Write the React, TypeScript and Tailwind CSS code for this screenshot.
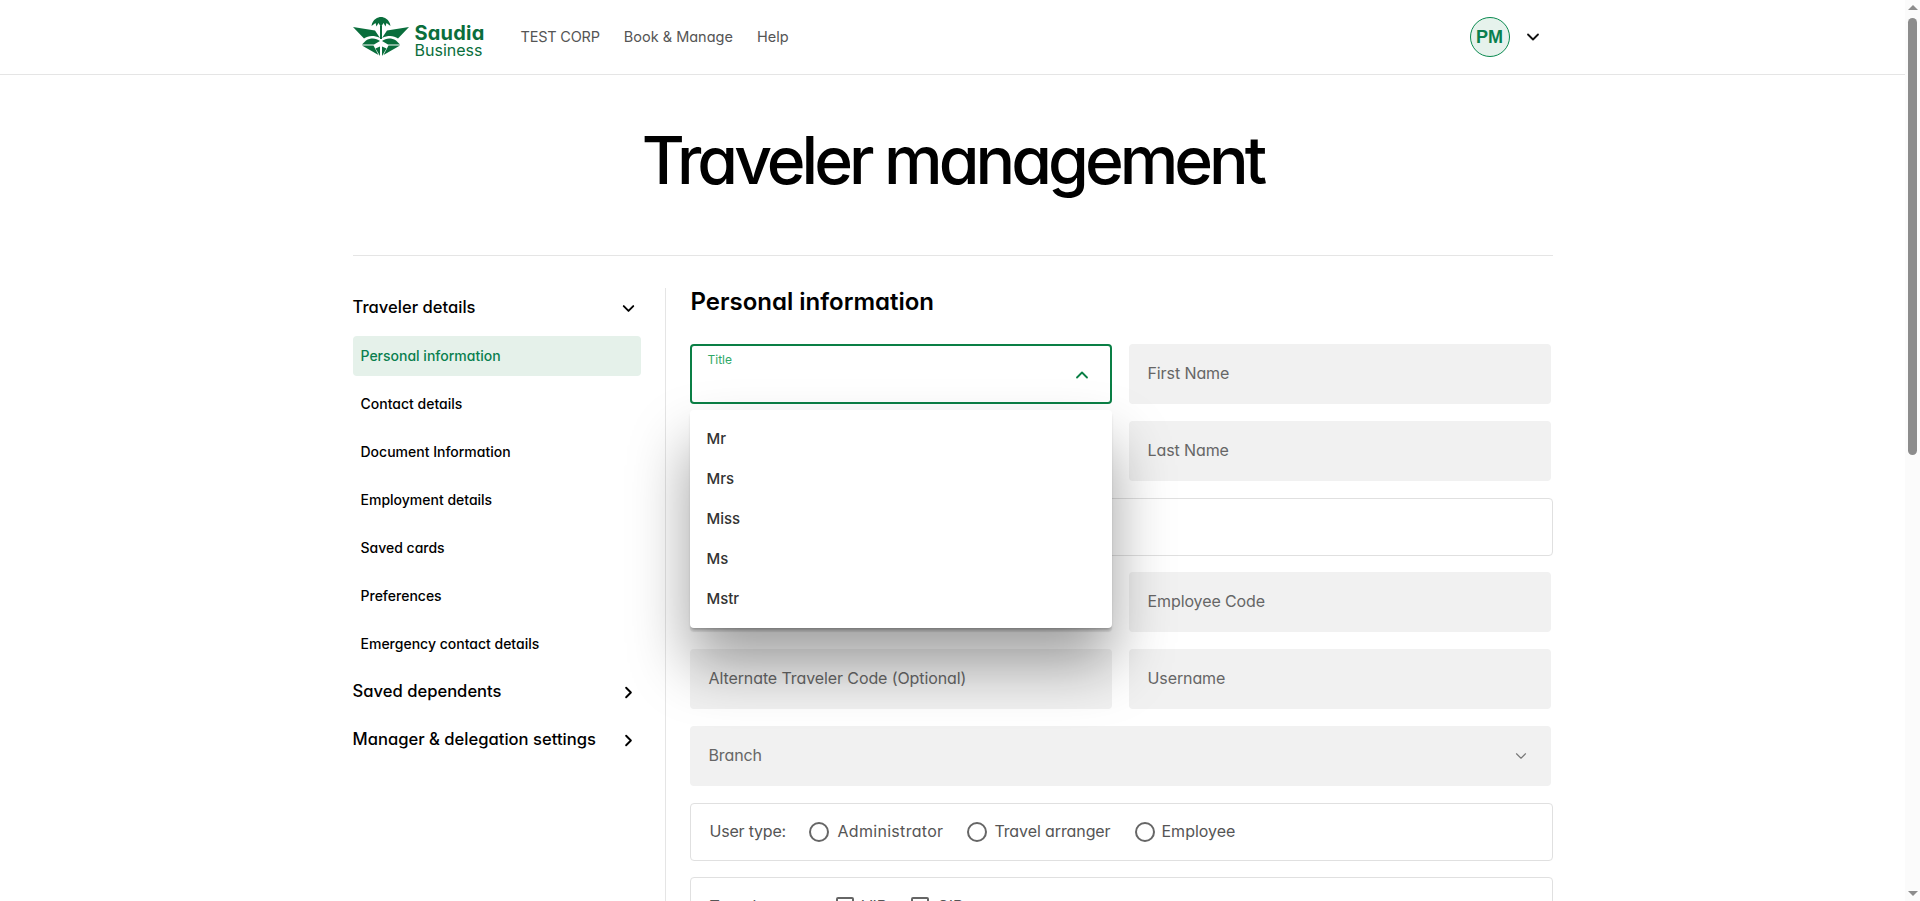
import React from "react";
import { ChevronDown, ChevronRight, ChevronUp } from "lucide-react";

const f = "font-['Inter','Liberation_Sans',sans-serif] [font-feature-settings:'cv11','ss03']";

function Logo() {
  return (
    <div className="flex items-center gap-[6px] w-[132px] h-[42px] text-[#0a6e3c]">
      <svg width="56" height="40" viewBox="0 0 56 40" className="shrink-0" fill="#0a6e3c">
        <path d="M0 10 L22 13.5 L27 21 C21 18 15 18.5 11 21.5 Z" />
        <path d="M56 10 L34 13.5 L29 21 C35 18 41 18.5 45 21.5 Z" />
        <path d="M9 27.5 L13 23.5 C18 20.5 23 21 27 24 L21 27.5 Z" />
        <path d="M47 27.5 L43 23.5 C38 20.5 33 21 29 24 L35 27.5 Z" />
        <path d="M27 39 L27 29.5 L22.5 31.5 Z" />
        <path d="M29 39 L29 29.5 L33.5 31.5 Z" />
        <path d="M9 28.5 L20.5 28.5 L25.5 38 Z" />
        <path d="M47 28.5 L35.5 28.5 L30.5 38 Z" />
        <rect x="27" y="9" width="2" height="13" />
        <path d="M18.5 9 C19.5 2 25 0 28 0 C31 0 36.500 2 37.500 9 L33.500 6 L32.500 9.500 L30.500 6 L28 10 L25.500 6 L23.500 9.500 L22.500 6 Z" />
      </svg>
      <div className="flex flex-col mt-[9px]">
        <div className="text-[20px] font-bold leading-[17px] tracking-[0.2px]">Saudia</div>
        <div className="text-[16px] leading-[17px] font-normal">Business</div>
      </div>
    </div>
  );
}

function Field({ label, chevron, full }: { label?: string; chevron?: boolean; full?: boolean }) {
  return (
    <div className={`h-[60px] bg-[#f1f1f1] rounded-[4px] flex items-center justify-between pl-[19px] pr-[21px] text-[16px] tracking-[-0.1px] text-[#666] ${full ? "w-[861px]" : "w-[422px]"}`}>
      <span className="-mt-[3px]">{label}</span>
      {chevron && <ChevronDown size={18} strokeWidth={1.5} className="text-[#777]" />}
    </div>
  );
}

function Row({ children }: { children: React.ReactNode }) {
  return <div className="h-[61px] flex gap-[17px]">{children}</div>;
}

function Radio({ label, cls, tight }: { label: string; cls?: string; tight?: boolean }) {
  return (
    <div className={`flex items-center ${tight ? "gap-[7px]" : "gap-[9px]"}`}>
      <span className="w-5 h-5 rounded-full border-2 border-[#666] bg-white" />
      <span className={`text-[16px] text-[#555] -mt-[2px] ${cls ?? ""}`}>{label}</span>
    </div>
  );
}

function Check({ label }: { label: string }) {
  return (
    <div className="flex items-center gap-2">
      <span className="w-[18px] h-[18px] rounded-[2px] border-2 border-[#666] bg-white" />
      <span className="text-[16px] text-[#555]">{label}</span>
    </div>
  );
}

function SideHead({ label, open }: { label: string; open?: boolean }) {
  return (
    <div className="h-10 flex items-center justify-between text-[16.6px] font-medium text-black">
      <span className="-mt-[1px]">{label}</span>
      {open ? <ChevronDown size={19} strokeWidth={2.4} className="mr-[3px]" /> : <ChevronRight size={19} strokeWidth={2.4} className="mr-[3px]" />}
    </div>
  );
}

function SideItem({ label, active }: { label: string; active?: boolean }) {
  return (
    <div className={`h-10 flex items-center px-2 rounded-[4px] text-[14px] font-medium ${active ? "bg-[#e5f1ea] text-[#0a7f4f]" : "text-black"}`}>
      <span className="-mt-[2px]">{label}</span>
    </div>
  );
}

export default function App() {
  return (
    <div className={`h-[901px] overflow-hidden flex bg-white ${f}`}>
      <div className="flex-1 min-w-0">
        <header className="h-[75px] border-b border-[#e5e5e5]">
          <div className="w-[1200px] mx-auto h-full flex items-center">
            <Logo />
            <nav className="ml-[36px] flex gap-[24px] text-[14.5px] text-[#555]">
              <span className="tracking-[-0.2px]">TEST CORP</span>
              <span>Book &amp; Manage</span>
              <span>Help</span>
            </nav>
            <div className="ml-auto mr-[10px] flex items-center gap-[13px]">
              <div className="w-10 h-10 rounded-full border border-[#0a8a50] bg-[#e6f2ec] flex items-center justify-center text-[#0a7f4f] text-[18px] font-bold font-['Liberation_Sans',sans-serif]">PM</div>
              <ChevronDown size={20} strokeWidth={2.2} className="text-[#111]" />
            </div>
          </div>
        </header>

        <div className="w-[1200px] mx-auto">
          <div className="h-[181px] border-b border-[#e5e5e5] flex items-center justify-center">
            <h1 className="text-[66px] font-medium text-black tracking-[-4px] -mt-[10px]">Traveler management</h1>
          </div>

          <div className="mt-[32px] flex">
            <aside className="w-[288px] flex flex-col gap-2 shrink-0">
              <SideHead label="Traveler details" open />
              <SideItem label="Personal information" active />
              <SideItem label="Contact details" />
              <SideItem label="Document Information" />
              <SideItem label="Employment details" />
              <SideItem label="Saved cards" />
              <SideItem label="Preferences" />
              <SideItem label="Emergency contact details" />
              <SideHead label="Saved dependents" />
              <SideHead label="Manager &amp; delegation settings" />
            </aside>

            <main className="ml-6 border-l border-[#e5e5e5] pl-[24px] w-[887px] h-[700px]">
              <h2 className="h-[56px] pl-px text-[24px] leading-[28px] font-semibold text-black">Personal information</h2>
              <div className="flex flex-col gap-4">
                <Row>
                  <div className="relative w-[422px] h-[60px] rounded-[4px] border-2 border-[#0a7f45] bg-white">
                    <span className="absolute left-[16px] top-[5px] text-[12px] text-[#2fa866]">Title</span>
                    <ChevronUp size={20} strokeWidth={2.2} className="absolute right-[18px] top-[19px] text-[#0a7f45]" />
                    <div className="absolute -left-[2px] top-[64px] w-[422px] h-[218px] py-[9px] z-10 bg-white rounded-[4px] shadow-[0_3px_3px_-1px_rgba(0,0,0,0.25),0_35px_60px_rgba(0,0,0,0.38)]">
                      {["Mr", "Mrs", "Miss", "Ms", "Mstr"].map((o) => (
                        <div key={o} className="h-10 flex items-center pl-[17px] text-[15px] font-medium text-[#333]">{o}</div>
                      ))}
                    </div>
                  </div>
                  <Field label="First Name" />
                </Row>
                <Row>
                  <Field />
                  <Field label="Last Name" />
                </Row>
                <div className="h-[58px] w-[863px] border border-[#e0e0e0] rounded-[4px]" />
                <Row>
                  <Field />
                  <Field label="Employee Code" />
                </Row>
                <Row>
                  <Field label="Alternate Traveler Code (Optional)" />
                  <Field label="Username" />
                </Row>
                <Row>
                  <Field label="Branch" chevron full />
                </Row>
                <div className="h-[58px] w-[863px] border border-[#e0e0e0] rounded-[4px] flex items-center pl-[19px]">
                  <span className="text-[16px] tracking-[-0.2px] text-[#555] w-[99px] -mt-[2px]">User type:</span>
                  <div className="flex gap-[24px]">
                    <Radio label="Administrator" cls="tracking-[0.3px]" />
                    <Radio label="Travel arranger" cls="tracking-[-0.1px]" tight />
                    <Radio label="Employee" tight />
                  </div>
                </div>
                <div className="h-[58px] w-[863px] border border-[#e0e0e0] rounded-[4px] flex items-center pl-[19px]">
                  <span className="text-[16px] text-[#555] w-[126px]">Traveler type:</span>
                  <div className="flex gap-[24px]">
                    <Check label="VIP" />
                    <Check label="CIP" />
                  </div>
                </div>
              </div>
            </main>
          </div>
        </div>
      </div>

      <div className="w-[15px] shrink-0 bg-[#fbfbfb] flex flex-col items-center justify-between relative">
        <div className="mt-[5px] w-0 h-0 border-x-[5px] border-x-transparent border-b-[5px] border-b-[#8c8c8c]" />
        <div className="absolute top-[18px] left-[3px] w-[9px] h-[437px] rounded-full bg-[#8c8c8c]" />
        <div className="mb-[5px] w-0 h-0 border-x-[5px] border-x-transparent border-t-[5px] border-t-[#8c8c8c]" />
      </div>
    </div>
  );
}
